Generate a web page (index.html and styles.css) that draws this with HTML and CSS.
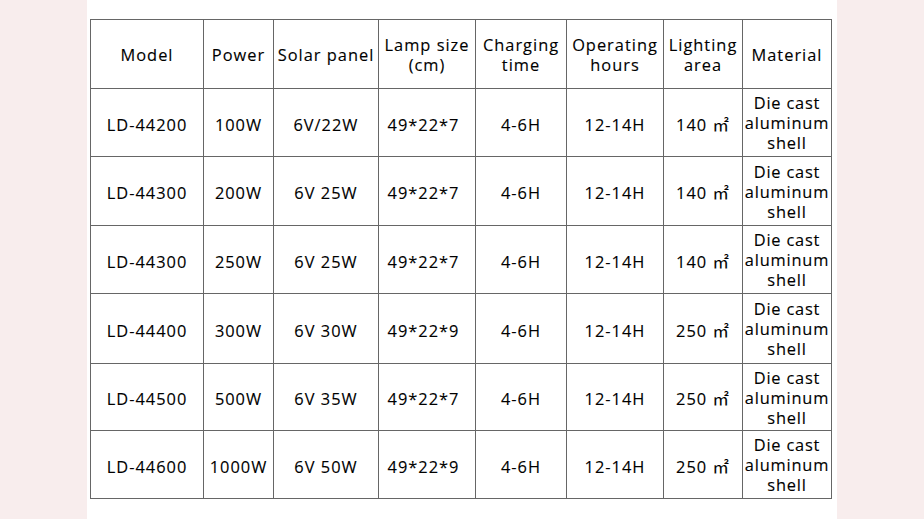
FILE: index.html
```html
<!DOCTYPE html>
<html>
<head>
<meta charset="utf-8">
<link rel="stylesheet" href="styles.css">
</head>
<body>
<div class="panel">
<table class="spec">
<colgroup>
<col class="c1"><col class="c2"><col class="c3"><col class="c4"><col class="c5"><col class="c6"><col class="c7"><col class="c8">
</colgroup>
<tr class="head">
<td>Model</td><td>Power</td><td>Solar panel</td><td>Lamp size<br>(cm)</td><td>Charging<br>time</td><td>Operating<br>hours</td><td>Lighting<br>area</td><td>Material</td>
</tr>
<tr class="r68"><td>LD-44200</td><td>100W</td><td>6V/22W</td><td class="size">49*22*7</td><td>4-6H</td><td>12-14H</td><td>140 ㎡</td><td class="mat">Die cast<br>aluminum<br>shell</td></tr>
<tr class="r69"><td>LD-44300</td><td>200W</td><td>6V 25W</td><td class="size">49*22*7</td><td>4-6H</td><td>12-14H</td><td>140 ㎡</td><td class="mat">Die cast<br>aluminum<br>shell</td></tr>
<tr class="r68"><td>LD-44300</td><td>250W</td><td>6V 25W</td><td class="size">49*22*7</td><td>4-6H</td><td>12-14H</td><td>140 ㎡</td><td class="mat">Die cast<br>aluminum<br>shell</td></tr>
<tr class="r70"><td>LD-44400</td><td>300W</td><td>6V 30W</td><td class="size">49*22*9</td><td>4-6H</td><td>12-14H</td><td>250 ㎡</td><td class="mat">Die cast<br>aluminum<br>shell</td></tr>
<tr class="r67"><td>LD-44500</td><td>500W</td><td>6V 35W</td><td class="size">49*22*7</td><td>4-6H</td><td>12-14H</td><td>250 ㎡</td><td class="mat">Die cast<br>aluminum<br>shell</td></tr>
<tr class="r68"><td>LD-44600</td><td>1000W</td><td>6V 50W</td><td class="size">49*22*9</td><td>4-6H</td><td>12-14H</td><td>250 ㎡</td><td class="mat">Die cast<br>aluminum<br>shell</td></tr>
</table>
</div>
</body>
</html>
```
FILE: styles.css
```css
html, body {
  margin: 0;
  padding: 0;
  background: #f8eded;
  height: 100%;
}
.panel {
  margin-left: 87px;
  width: 750px;
  height: 519px;
  background: #ffffff;
  padding-top: 19px;
  padding-left: 3px;
  box-sizing: border-box;
  overflow: hidden;
}
.spec {
  border-collapse: collapse;
  table-layout: fixed;
  width: 742px;
  font-family: "Open Sans", "Noto Sans", "Noto Sans CJK SC", sans-serif;
  font-size: 16.4px;
  letter-spacing: 1px;
  color: #000;
  -webkit-text-stroke: 0.12px #000;
}
.spec td {
  border: 1px solid #666666;
  text-align: center;
  vertical-align: middle;
  padding: 4px 0 0 0;
  line-height: 20px;
  white-space: nowrap;
  box-sizing: border-box;
}
.spec td.mat {
  padding-top: 1px;
  letter-spacing: 0.8px;
}
.spec td.size {
  padding-right: 7px;
}
.spec tr.head td {
  height: 69px;
  padding-top: 1px;
}
.spec tr.r67 td { height: 67px; }
.spec tr.r68 td { height: 68px; }
.spec tr.r69 td { height: 69px; }
.spec tr.r70 td { height: 70px; }
.c1 { width: 113px; }
.c2 { width: 70px; }
.c3 { width: 105px; }
.c4 { width: 97px; }
.c5 { width: 91px; }
.c6 { width: 97px; }
.c7 { width: 79px; }
.c8 { width: 89px; }
```
